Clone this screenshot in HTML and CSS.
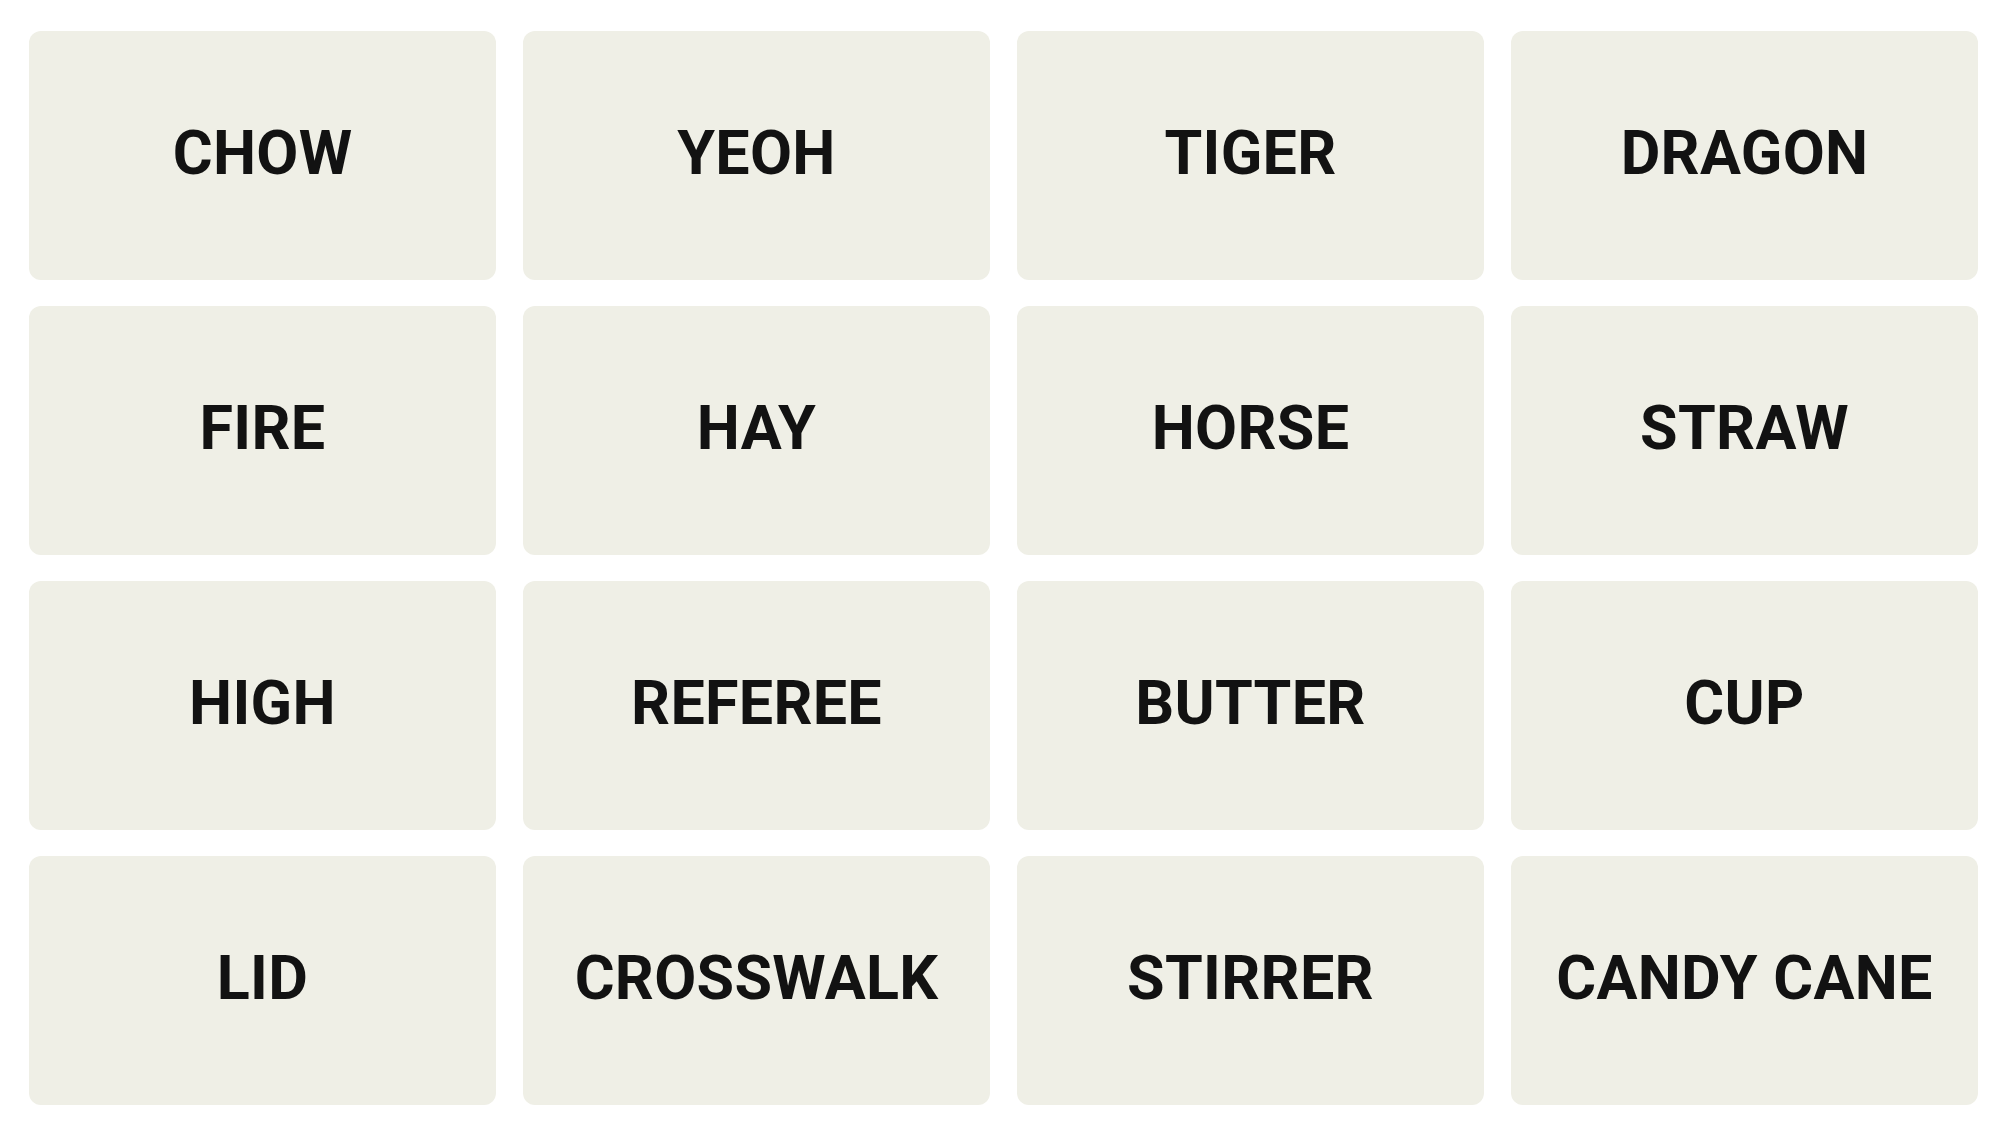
FILE: index.html
```html
<!DOCTYPE html>
<html>
<head>
<meta charset="utf-8">
<link rel="stylesheet" href="styles.css">
</head>
<body>
<div class="board">
  <div class="tile">CHOW</div>
  <div class="tile">YEOH</div>
  <div class="tile">TIGER</div>
  <div class="tile">DRAGON</div>
  <div class="tile">FIRE</div>
  <div class="tile">HAY</div>
  <div class="tile">HORSE</div>
  <div class="tile">STRAW</div>
  <div class="tile">HIGH</div>
  <div class="tile">REFEREE</div>
  <div class="tile">BUTTER</div>
  <div class="tile">CUP</div>
  <div class="tile">LID</div>
  <div class="tile">CROSSWALK</div>
  <div class="tile">STIRRER</div>
  <div class="tile">CANDY CANE</div>
</div>
</body>
</html>
```

FILE: styles.css
```css
html, body {
  margin: 0;
  padding: 0;
  background: #ffffff;
}
body {
  width: 2000px;
  height: 1136px;
  overflow: hidden;
}
.board {
  display: grid;
  grid-template-columns: repeat(4, 467px);
  grid-template-rows: repeat(4, 249px);
  column-gap: 27px;
  row-gap: 26px;
  padding: 31px 0 0 29px;
}
.tile {
  background: #efefe6;
  border-radius: 12px;
  display: flex;
  align-items: center;
  justify-content: center;
  font-family: Roboto, "Liberation Sans", sans-serif;
  font-weight: 700;
  font-size: 61px;
  letter-spacing: 0.3px;
  color: #121212;
  padding-bottom: 6px;
  box-sizing: border-box;
}
```
